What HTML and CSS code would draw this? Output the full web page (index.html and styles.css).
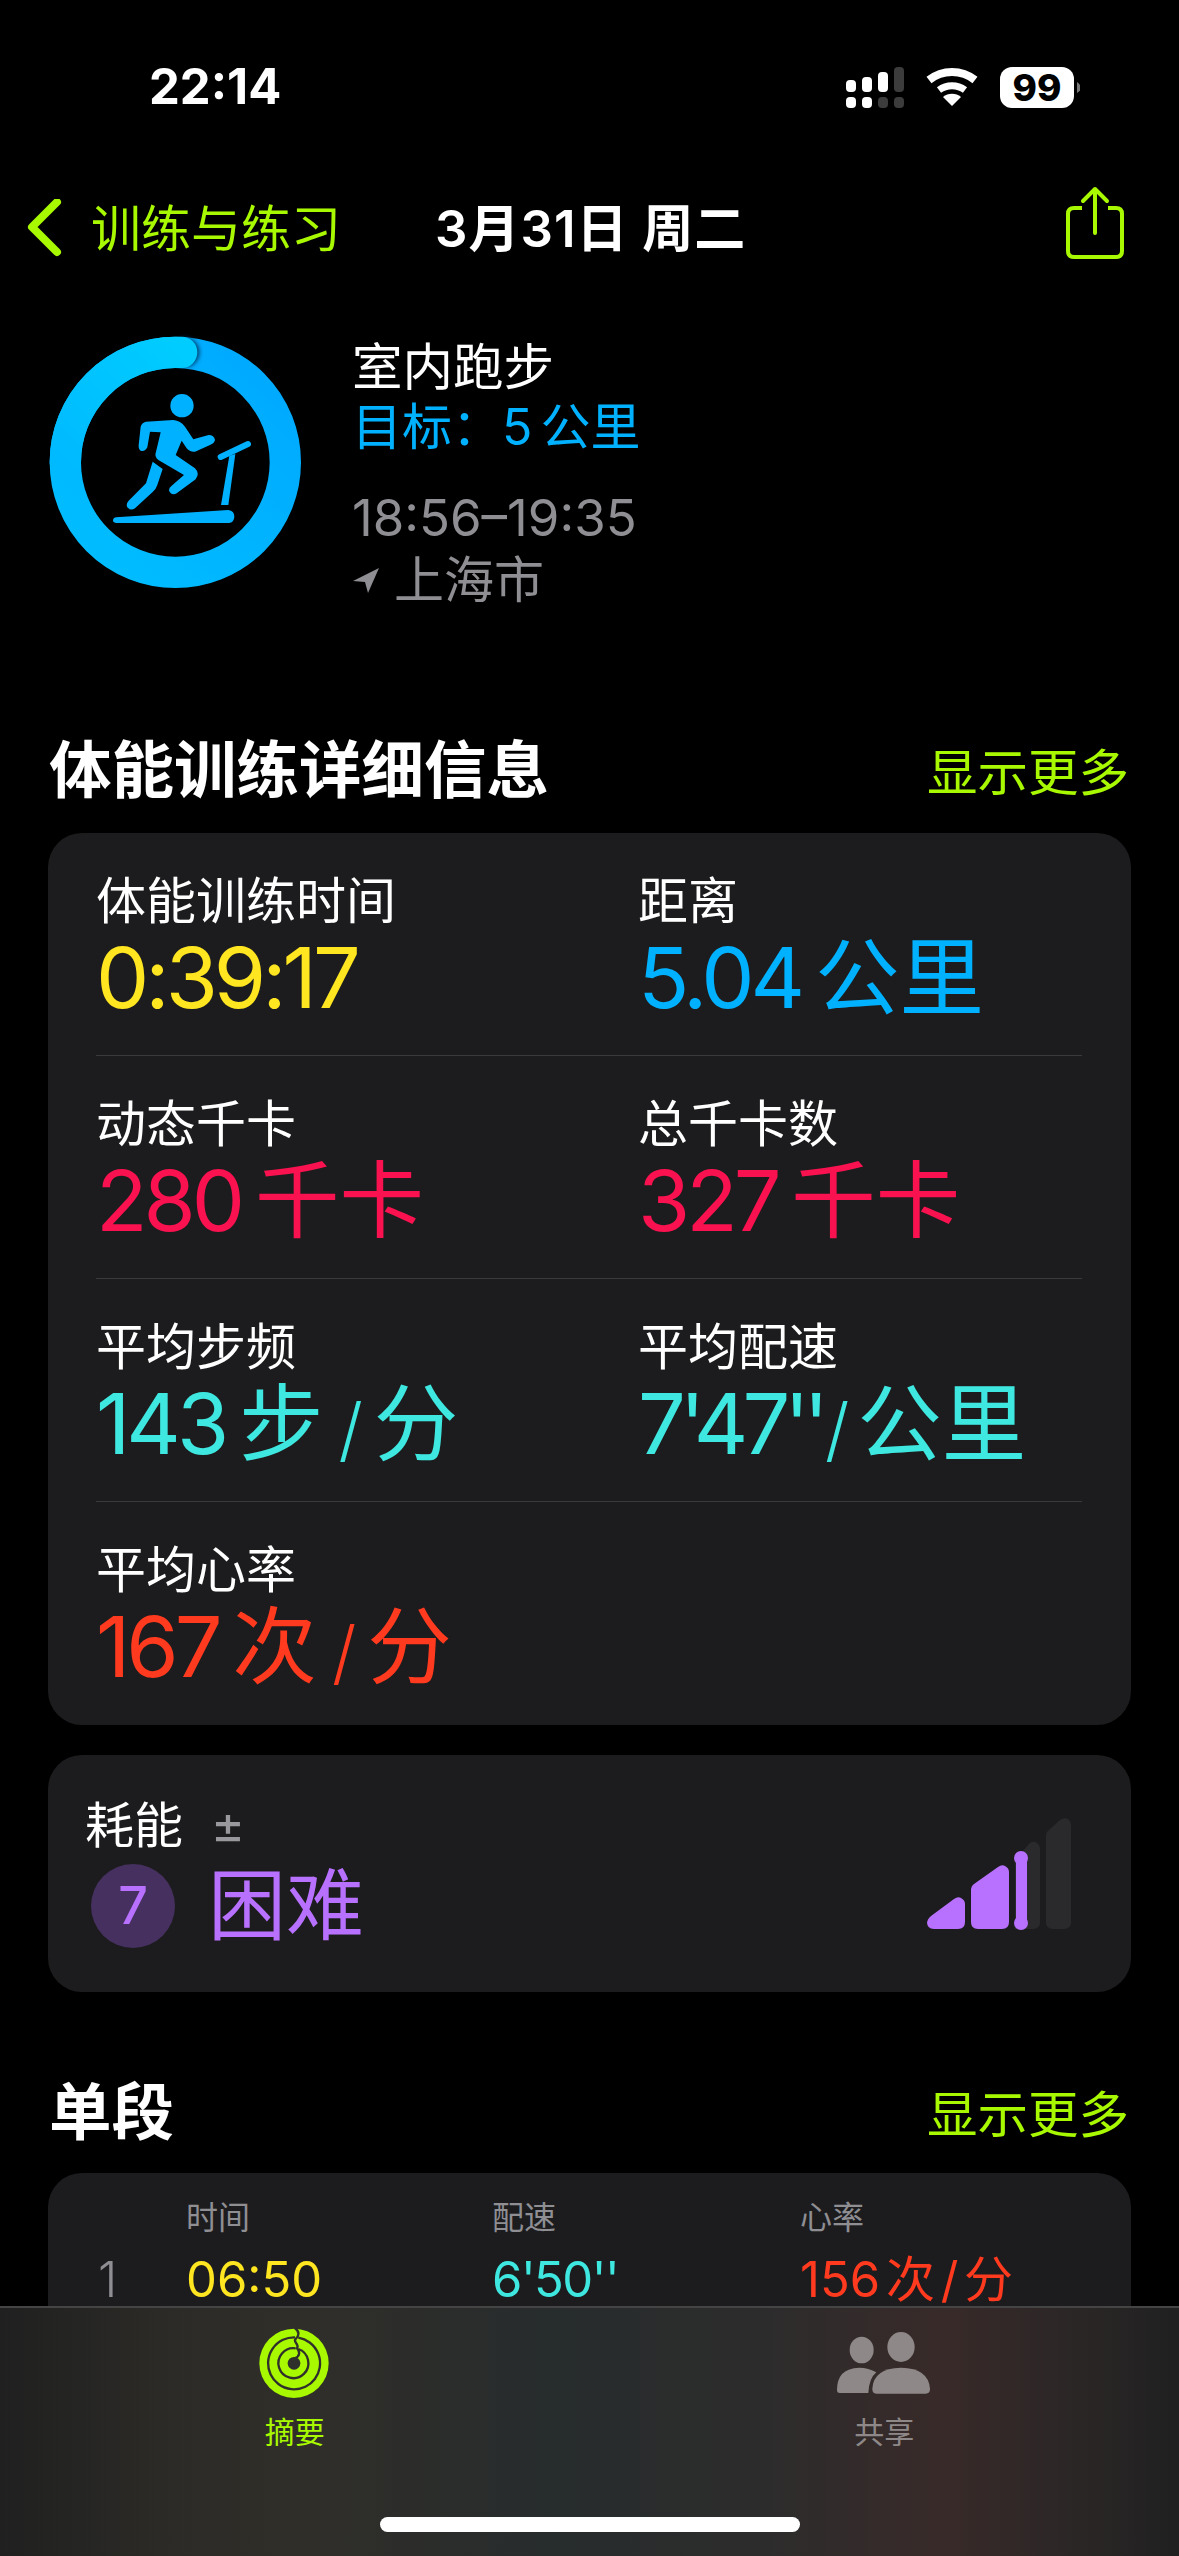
FILE: index.html
```html
<!DOCTYPE html>
<html lang="zh-CN">
<head>
<meta charset="UTF-8">
<meta name="viewport" content="width=device-width, initial-scale=1.0">
<title>体能训练详细信息</title>
<link rel="stylesheet" href="styles.css">
</head>
<body>
<div class="phone">

  <!-- status bar -->
  <div class="status">
    <span class="clock">22:14</span>
    <svg class="status-icons" width="240" height="60" viewBox="840 60 240 60">
      <g fill="#fff">
        <rect x="846" y="80" width="10" height="12" rx="4"/>
        <rect x="862" y="77" width="10" height="15" rx="4"/>
        <rect x="878" y="72" width="10" height="20" rx="4"/>
        <rect x="846" y="97" width="10" height="11" rx="4"/>
        <rect x="862" y="97" width="10" height="11" rx="4"/>
      </g>
      <g fill="#3c3c3c">
        <rect x="894" y="67" width="10" height="25" rx="4"/>
        <rect x="878" y="97" width="10" height="11" rx="4"/>
        <rect x="894" y="97" width="10" height="11" rx="4"/>
      </g>
      <path d="M929 80 A37 37 0 0 1 975 80" fill="none" stroke="#fff" stroke-width="8" stroke-linecap="butt"/>
      <path d="M939 90 A22 22 0 0 1 965 90" fill="none" stroke="#fff" stroke-width="7"/>
      <path d="M952 106 L943 97 A14 14 0 0 1 961 97 Z" fill="#fff"/>
      <rect x="1000" y="67" width="74" height="41" rx="12" fill="#fff"/>
      <path d="M1077 82 L1077 93 Q1081 90 1081 87.500 Q1081 85 1077 82 Z" fill="#777"/>
    </svg>
    <span class="battery-num">99</span>
  </div>

  <!-- nav -->
  <div class="nav">
    <svg class="back-icon" width="36" height="58" viewBox="0 0 36 58">
      <path d="M31 3 L6 28 L31 53" fill="none" stroke="#a8f900" stroke-width="8" stroke-linecap="round" stroke-linejoin="round"/>
    </svg>
    <span class="back-text">训练与练习</span>
    <span class="nav-title">3月31日 周二</span>
    <svg class="share-icon" width="60" height="74" viewBox="0 0 60 74">
      <path d="M17 22 H9 Q3 22 3 28 V65 Q3 71 9 71 H51 Q57 71 57 65 V28 Q57 22 51 22 H43" fill="none" stroke="#a8f900" stroke-width="4"/>
      <path d="M30 47 V3 M18 15 L30 3 L42 15" fill="none" stroke="#a8f900" stroke-width="4" stroke-linecap="round" stroke-linejoin="round"/>
    </svg>
  </div>

  <!-- workout head -->
  <div class="head">
    <svg class="ring" width="300" height="280" viewBox="0 0 900 840">
      <defs>
        <linearGradient id="ringGrad" x1="0" y1="1" x2="1" y2="0">
          <stop offset="0" stop-color="#00bfff"/>
          <stop offset="1" stop-color="#00a8ff"/>
        </linearGradient>
        <linearGradient id="capGrad" x1="0" y1="1" x2="1" y2="0">
          <stop offset="0" stop-color="#00baff"/>
          <stop offset="1" stop-color="#00ccff"/>
        </linearGradient>
        <filter id="capBlur" x="-50%" y="-50%" width="200%" height="200%"><feGaussianBlur stdDeviation="7"/></filter>
      </defs>
      <circle cx="436" cy="427" r="330" fill="none" stroke="url(#ringGrad)" stroke-width="94"/>
      <circle cx="464" cy="97" r="44" fill="#003a66" filter="url(#capBlur)"/>
      <path d="M106 427 A330 330 0 0 1 436 97 L455 97" fill="none" stroke="url(#capGrad)" stroke-width="94" stroke-linecap="round"/>
      <g fill="#00b1ff">
        <circle cx="456" cy="257" r="35"/>
        <path d="M348 305 L430 300 Q452 302 465 320 L490 358 L536 345 Q552 345 555 360 Q553 370 540 375 L495 395 Q480 397 470 385 L455 362 L437 405 L495 445 Q510 460 497 478 L440 520 Q425 528 417 512 Q417 502 425 497 L462 465 L385 420 Q372 410 378 395 L392 337 L360 335 L352 382 Q345 396 332 392 Q325 388 326 375 L332 320 Q335 308 348 305 Z"/>
        <path d="M368 425 L398 447 L382 495 Q378 508 368 516 L315 565 Q302 574 292 562 Q287 552 296 542 L348 490 Z"/>
        <path d="M258 592 L595 570 Q613 572 613 590 Q612 607 597 609 L258 609 Q248 607 249 600 Q250 593 258 592 Z"/>
        <path d="M573 555 L595 555 L616 402 L598 407 Z"/>
      </g>
      <path d="M572 411 L654 372" fill="none" stroke="#00b1ff" stroke-width="18" stroke-linecap="round"/>
    </svg>
    <div class="head-text">
      <div class="head-line white">室内跑步</div>
      <div class="head-line blue head-goal">目标：5 公里</div>
      <div class="head-line gray head-time">18:56–19:35</div>
      <div class="head-line gray head-place">
        <svg width="28" height="28" viewBox="0 0 28 28"><path d="M27 2 L1 15 L13 16 L16 27 Z" fill="#8e8e93"/></svg>
        上海市
      </div>
    </div>
  </div>

  <!-- details -->
  <div class="section-head first">
    <span class="section-title">体能训练详细信息</span>
    <span class="more">显示更多</span>
  </div>
  <div class="card details">
    <div class="metric">
      <div class="metric-label">体能训练时间</div>
      <div class="metric-value yellow"><span class="num">0:39:17</span></div>
    </div>
    <div class="metric">
      <div class="metric-label">距离</div>
      <div class="metric-value blue"><span class="num">5.04</span> 公里</div>
    </div>
    <div class="metric">
      <div class="metric-label">动态千卡</div>
      <div class="metric-value pink"><span class="num">280</span> 千卡</div>
    </div>
    <div class="metric">
      <div class="metric-label">总千卡数</div>
      <div class="metric-value pink"><span class="num">327</span> 千卡</div>
    </div>
    <div class="metric">
      <div class="metric-label">平均步频</div>
      <div class="metric-value cyan"><span class="num">143</span> 步<span class="slash">/</span>分</div>
    </div>
    <div class="metric">
      <div class="metric-label">平均配速</div>
      <div class="metric-value cyan"><span class="num num-tight">7'47''</span><span class="slash slash-tight">/</span>公里</div>
    </div>
    <div class="metric metric-last">
      <div class="metric-label">平均心率</div>
      <div class="metric-value red"><span class="num">167</span> 次<span class="slash">/</span>分</div>
    </div>
  </div>

  <!-- effort -->
  <div class="card effort">
    <div class="effort-left">
      <div class="effort-label">耗能 <span class="plusminus">±</span></div>
      <div class="effort-value">
        <span class="effort-num">7</span>
        <span class="effort-text">困难</span>
      </div>
    </div>
    <svg class="effort-bars" width="180" height="140" viewBox="0 0 180 140">
      <g fill="#2a2a2c">
        <path d="M105 129 V60 L119 44 Q123 40 127 43 Q130 45 130 50 V122 Q130 129 123 129 Z"/>
        <path d="M136 36 Q136 32 139 30 L150 20 Q154 17 158 19 Q161 21 161 26 V122 Q161 129 154 129 H143 Q136 129 136 122 Z"/>
      </g>
      <g fill="#b871ff">
        <path d="M17 124 Q17 119 21 116 L44 99 Q48 96 51 98 Q55 100 55 104 V122 Q55 129 48 129 H24 Q17 129 17 122 Z"/>
        <path d="M61 89 Q61 86 64 84 L88 67 Q92 64 95 66 Q99 68 99 72 V122 Q99 129 92 129 H68 Q61 129 61 122 Z"/>
        <rect x="106" y="55" width="11" height="70"/>
        <circle cx="111" cy="58" r="7"/>
        <circle cx="111" cy="123" r="7"/>
      </g>
    </svg>
  </div>

  <!-- splits -->
  <div class="section-head second">
    <span class="section-title">单段</span>
    <span class="more">显示更多</span>
  </div>
  <div class="card splits">
    <div class="split-row split-heads">
      <span></span><span>时间</span><span>配速</span><span>心率</span>
    </div>
    <div class="split-row split-vals">
      <span class="split-num">1</span>
      <span class="yellow">06:50</span>
      <span class="cyan split-pace">6'50''</span>
      <span class="red split-heart">156 次 / 分</span>
    </div>
  </div>

  <!-- tab bar -->
  <div class="tabbar">
    <div class="tab tab-on">
      <svg width="100" height="95" viewBox="0 0 300 285">
        <circle cx="147" cy="145" r="104" fill="#a8f900"/>
        <g fill="none" stroke="#2f2f2b" stroke-width="7">
          <path d="M150 67 A78 78 0 1 0 160 68"/>
          <path d="M152 100 A45 45 0 1 0 160 102"/>
          <path d="M150 40 C165 50 162 62 152 72 C142 80 165 88 156 100 C165 110 166 122 150 130" stroke-linecap="round"/>
        </g>
        <circle cx="147" cy="145" r="19" fill="#2f2f2b"/>
      </svg>
      <span>摘要</span>
    </div>
    <div class="tab">
      <svg width="130" height="95" viewBox="0 0 390 285">
        <g fill="#8f8888">
          <ellipse cx="128" cy="105" rx="36" ry="40"/>
          <ellipse cx="246" cy="96" rx="41" ry="45"/>
          <path d="M54 225 Q54 160 120 158 Q150 158 172 172 Q150 190 148 234 H62 Q54 234 54 225 Z"/>
          <path d="M160 222 Q162 160 246 158 Q330 160 333 222 Q333 236 320 236 H172 Q160 236 160 222 Z"/>
        </g>
      </svg>
      <span>共享</span>
    </div>
    <div class="home-bar"></div>
  </div>

</div>
</body>
</html>
```

FILE: styles.css
```css
/* base */
* {
  box-sizing: border-box;
}

html, body {
  margin: 0;
  padding: 0;
  background: #000;
}

body {
  font-family: Inter, "Noto Sans CJK SC", sans-serif;
  color: #fff;
}

.phone {
  position: relative;
  width: 1179px;
  height: 2556px;
  overflow: hidden;
  background: #000;
}

/* colours */
.white { color: #fff; }
.blue { color: #00b1ff; }
.gray { color: #8e8e93; }
.yellow { color: #ffe620; }
.pink { color: #fa114f; }
.cyan { color: #3ee8e0; }
.red { color: #ff3a1e; }

/* status bar */
.status {
  position: relative;
  height: 176px;
}

.clock {
  position: absolute;
  left: 149px;
  top: 57px;
  font-size: 49px;
  line-height: 60px;
  font-weight: 700;
}

.status-icons {
  position: absolute;
  left: 840px;
  top: 60px;
}

.battery-num {
  position: absolute;
  left: 1000px;
  top: 67px;
  width: 74px;
  text-align: center;
  color: #000;
  font-size: 37px;
  line-height: 41px;
  font-weight: 800;
}

/* nav */
.nav {
  display: flex;
  align-items: center;
  height: 104px;
  padding: 0 54px 0 26px;
}

.back-text {
  margin-left: 29px;
  margin-bottom: 6px;
  font-size: 50px;
  color: #a8f900;
}

.nav-title {
  margin-left: 94px;
  margin-bottom: 6px;
  font-size: 51px;
  font-weight: 600;
  letter-spacing: 1px;
}

.share-icon {
  margin-left: auto;
  margin-top: -10px;
}

/* workout head */
.head {
  display: flex;
  margin-top: 40px;
  padding-left: 30px;
  height: 290px;
}

.head-text {
  margin-left: 22px;
  padding-top: 17px;
}

.head-line {
  font-size: 50.500px;
  line-height: 60px;
}

.head-goal {
  font-size: 50px;
  word-spacing: -6px;
}

.head-time {
  margin-top: 31px;
  font-size: 51px;
}

.head-place {
  display: flex;
  align-items: center;
  gap: 14px;
  margin-top: 2px;
  font-size: 50px;
}

/* section headers */
.section-head {
  display: flex;
  align-items: center;
  justify-content: space-between;
  height: 90px;
  padding: 0 50px 0 49px;
}

.section-head.first {
  margin-top: 110px;
}

.section-head.second {
  margin-top: 70px;
}

.section-title {
  font-size: 62.500px;
  font-weight: 700;
}

.more {
  margin-top: 8px;
  font-size: 50.500px;
  color: #a8f900;
}

/* cards */
.card {
  margin: 0 48px;
  background: #1c1c1e;
  border-radius: 34px;
}

.details {
  display: grid;
  grid-template-columns: 542px 444px;
  margin-top: 23px;
  padding: 0 48px;
  height: 892px;
}

.metric {
  height: 223px;
  padding-top: 38px;
  border-bottom: 1px solid #3a3a3c;
}

.metric-last {
  grid-column: 1 / 3;
  border-bottom: 0;
}

.metric-label {
  font-size: 50px;
  line-height: 60px;
}

.metric-value {
  font-size: 84.500px;
  line-height: 92px;
  word-spacing: -10px;
  white-space: nowrap;
}

.num {
  letter-spacing: -4px;
}

.num-tight {
  letter-spacing: -6px;
}

.slash {
  display: inline-block;
  margin: 0 11px 0 15px;
  font-size: 70px;
  font-weight: 300;
  line-height: 56px;
}

.slash-tight {
  margin: 0 8px 0 2px;
}

/* effort */
.effort {
  display: flex;
  align-items: center;
  justify-content: space-between;
  height: 237px;
  margin-top: 30px;
  padding: 0 41px 0 37px;
}

.effort-label {
  font-size: 49px;
  line-height: 60px;
}

.plusminus {
  margin-left: 14px;
  font-size: 52px;
  line-height: 50px;
  color: #98989d;
}

.effort-value {
  display: flex;
  align-items: center;
  margin-top: 4px;
}

.effort-num {
  width: 84px;
  height: 84px;
  margin-left: 6px;
  border-radius: 50%;
  background: #46305f;
  color: #b871ff;
  font-size: 52px;
  line-height: 84px;
  font-weight: 500;
  text-align: center;
}

.effort-text {
  margin-left: 33px;
  font-size: 78px;
  line-height: 92px;
  color: #b871ff;
}

.effort-bars {
  margin-top: -7px;
}

/* splits */
.splits {
  margin-top: 21px;
  height: 300px;
  padding: 20px 0 0 50px;
}

.split-row {
  display: grid;
  grid-template-columns: 88px 306px 308px auto;
  white-space: nowrap;
}

.split-heads {
  font-size: 32px;
  line-height: 50px;
  color: #8e8e93;
}

.split-vals {
  margin-top: 6px;
  font-size: 49px;
  line-height: 62px;
}

.split-pace {
  letter-spacing: -1.500px;
}

.split-heart {
  word-spacing: -8px;
}

.split-num {
  color: #8e8e93;
  font-weight: 300;
}

/* tab bar */
.tabbar {
  position: absolute;
  left: 0;
  right: 0;
  bottom: 0;
  height: 250px;
  padding-top: 7px;
  display: flex;
  border-top: 2px solid #444;
  background: linear-gradient(to right, #202020 0%, #2c2b27 15%, #302e29 25%, #272c2d 47%, #2d2c2c 65%, #382a29 80%, #2a2626 92%, #202020 100%);
}

.tab {
  flex: 1;
  display: flex;
  flex-direction: column;
  align-items: center;
  color: #8e8888;
  font-size: 30px;
}

.tab span {
  margin-top: 2px;
  line-height: 40px;
}

.tab-on {
  color: #a8f900;
}

.home-bar {
  position: absolute;
  left: 380px;
  bottom: 24px;
  width: 420px;
  height: 15px;
  border-radius: 8px;
  background: #fff;
}
```
